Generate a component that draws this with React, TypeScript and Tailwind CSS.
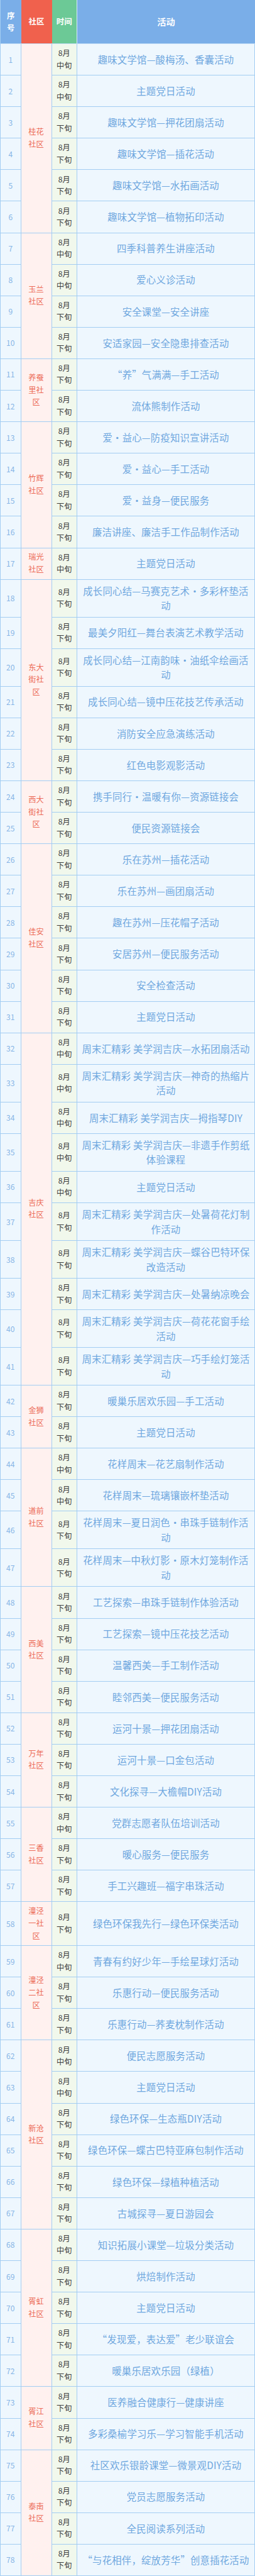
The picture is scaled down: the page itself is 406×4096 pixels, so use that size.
import React from "react";

type Row = { n: number; t: "中" | "下"; a: string[]; tall?: boolean };
type Group = { c: string[]; rows: Row[] };

const groups: Group[] = [
  {
    c: ["桂花", "社区"],
    rows: [
      { n: 1, t: "中", a: ["趣味文学馆—酸梅汤、香囊活动"] },
      { n: 2, t: "中", a: ["主题党日活动"] },
      { n: 3, t: "下", a: ["趣味文学馆—押花团扇活动"] },
      { n: 4, t: "下", a: ["趣味文学馆—插花活动"] },
      { n: 5, t: "下", a: ["趣味文学馆—水拓画活动"] },
      { n: 6, t: "下", a: ["趣味文学馆—植物拓印活动"] },
    ],
  },
  {
    c: ["玉兰", "社区"],
    rows: [
      { n: 7, t: "中", a: ["四季科普养生讲座活动"] },
      { n: 8, t: "中", a: ["爱心义诊活动"] },
      { n: 9, t: "下", a: ["安全课堂—安全讲座"] },
      { n: 10, t: "下", a: ["安适家园—安全隐患排查活动"] },
    ],
  },
  {
    c: ["养蚕", "里社", "区"],
    rows: [
      { n: 11, t: "下", a: ["“养”气满满—手工活动"] },
      { n: 12, t: "下", a: ["流体熊制作活动"] },
    ],
  },
  {
    c: ["竹辉", "社区"],
    rows: [
      { n: 13, t: "下", a: ["爱・益心—防疫知识宣讲活动"] },
      { n: 14, t: "下", a: ["爱・益心—手工活动"] },
      { n: 15, t: "下", a: ["爱・益身—便民服务"] },
      { n: 16, t: "下", a: ["廉洁讲座、廉洁手工作品制作活动"] },
    ],
  },
  {
    c: ["瑞光", "社区"],
    rows: [{ n: 17, t: "中", a: ["主题党日活动"] }],
  },
  {
    c: ["东大", "街社", "区"],
    rows: [
      { n: 18, t: "下", a: ["成长同心结—马赛克艺术・多彩杯垫活", "动"] },
      { n: 19, t: "下", a: ["最美夕阳红—舞台表演艺术教学活动"] },
      { n: 20, t: "下", a: ["成长同心结—江南韵味・油纸伞绘画活", "动"] },
      { n: 21, t: "下", a: ["成长同心结—镜中压花技艺传承活动"] },
      { n: 22, t: "下", a: ["消防安全应急演练活动"] },
      { n: 23, t: "下", a: ["红色电影观影活动"] },
    ],
  },
  {
    c: ["西大", "街社", "区"],
    rows: [
      { n: 24, t: "下", a: ["携手同行・温暖有你—资源链接会"] },
      { n: 25, t: "下", a: ["便民资源链接会"] },
    ],
  },
  {
    c: ["佳安", "社区"],
    rows: [
      { n: 26, t: "下", a: ["乐在苏州—插花活动"] },
      { n: 27, t: "下", a: ["乐在苏州—画团扇活动"] },
      { n: 28, t: "下", a: ["趣在苏州—压花帽子活动"] },
      { n: 29, t: "下", a: ["安居苏州—便民服务活动"] },
      { n: 30, t: "下", a: ["安全检查活动"] },
      { n: 31, t: "下", a: ["主题党日活动"] },
    ],
  },
  {
    c: ["吉庆", "社区"],
    rows: [
      { n: 32, t: "中", a: ["周末汇精彩 美学润吉庆—水拓团扇活动"] },
      { n: 33, t: "中", a: ["周末汇精彩 美学润吉庆—神奇的热缩片", "活动"] },
      { n: 34, t: "中", a: ["周末汇精彩 美学润吉庆—拇指琴DIY"] },
      { n: 35, t: "中", a: ["周末汇精彩 美学润吉庆—非遗手作剪纸", "体验课程"] },
      { n: 36, t: "中", a: ["主题党日活动"] },
      { n: 37, t: "下", a: ["周末汇精彩 美学润吉庆—处暑荷花灯制", "作活动"] },
      { n: 38, t: "下", a: ["周末汇精彩 美学润吉庆—蝶谷巴特环保", "改造活动"] },
      { n: 39, t: "下", a: ["周末汇精彩 美学润吉庆—处暑纳凉晚会"] },
      { n: 40, t: "下", a: ["周末汇精彩 美学润吉庆—荷花花窗手绘", "活动"] },
      { n: 41, t: "下", a: ["周末汇精彩 美学润吉庆—巧手绘灯笼活", "动"] },
    ],
  },
  {
    c: ["金狮", "社区"],
    rows: [
      { n: 42, t: "下", a: ["暖巢乐居欢乐园—手工活动"] },
      { n: 43, t: "下", a: ["主题党日活动"] },
    ],
  },
  {
    c: ["道前", "社区"],
    rows: [
      { n: 44, t: "中", a: ["花样周末—花艺扇制作活动"] },
      { n: 45, t: "中", a: ["花样周末—琉璃镶嵌杯垫活动"] },
      { n: 46, t: "下", a: ["花样周末—夏日润色・串珠手链制作活", "动"] },
      { n: 47, t: "下", a: ["花样周末—中秋灯影・原木灯笼制作活", "动"] },
    ],
  },
  {
    c: ["西美", "社区"],
    rows: [
      { n: 48, t: "下", a: ["工艺探索—串珠手链制作体验活动"] },
      { n: 49, t: "下", a: ["工艺探索—镜中压花技艺活动"] },
      { n: 50, t: "下", a: ["温馨西美—手工制作活动"] },
      { n: 51, t: "下", a: ["睦邻西美—便民服务活动"] },
    ],
  },
  {
    c: ["万年", "社区"],
    rows: [
      { n: 52, t: "下", a: ["运河十景—押花团扇活动"] },
      { n: 53, t: "下", a: ["运河十景—口金包活动"] },
      { n: 54, t: "下", a: ["文化探寻—大檐帽DIY活动"] },
    ],
  },
  {
    c: ["三香", "社区"],
    rows: [
      { n: 55, t: "中", a: ["党群志愿者队伍培训活动"] },
      { n: 56, t: "下", a: ["暖心服务—便民服务"] },
      { n: 57, t: "下", a: ["手工兴趣班—福字串珠活动"] },
    ],
  },
  {
    c: ["潼泾", "一社", "区"],
    rows: [{ n: 58, t: "下", a: ["绿色环保我先行—绿色环保类活动"], tall: true }],
  },
  {
    c: ["潼泾", "二社", "区"],
    rows: [
      { n: 59, t: "中", a: ["青春有约好少年—手绘星球灯活动"] },
      { n: 60, t: "下", a: ["乐惠行动—便民服务活动"] },
      { n: 61, t: "下", a: ["乐惠行动—荞麦枕制作活动"] },
    ],
  },
  {
    c: ["新沧", "社区"],
    rows: [
      { n: 62, t: "中", a: ["便民志愿服务活动"] },
      { n: 63, t: "中", a: ["主题党日活动"] },
      { n: 64, t: "下", a: ["绿色环保—生态瓶DIY活动"] },
      { n: 65, t: "下", a: ["绿色环保—蝶古巴特亚麻包制作活动"] },
      { n: 66, t: "下", a: ["绿色环保—绿植种植活动"] },
      { n: 67, t: "下", a: ["古城探寻—夏日游园会"] },
    ],
  },
  {
    c: ["胥虹", "社区"],
    rows: [
      { n: 68, t: "中", a: ["知识拓展小课堂—垃圾分类活动"] },
      { n: 69, t: "下", a: ["烘焙制作活动"] },
      { n: 70, t: "下", a: ["主题党日活动"] },
      { n: 71, t: "下", a: ["“发现爱，表达爱”老少联谊会"] },
      { n: 72, t: "下", a: ["暖巢乐居欢乐园（绿植）"] },
    ],
  },
  {
    c: ["胥江", "社区"],
    rows: [
      { n: 73, t: "下", a: ["医养融合健康行—健康讲座"] },
      { n: 74, t: "下", a: ["多彩桑榆学习乐—学习智能手机活动"] },
    ],
  },
  {
    c: ["泰南", "社区"],
    rows: [
      { n: 75, t: "下", a: ["社区欢乐银龄课堂—微景观DIY活动"] },
      { n: 76, t: "下", a: ["党员志愿服务活动"] },
      { n: 77, t: "下", a: ["全民阅读系列活动"] },
      { n: 78, t: "下", a: ["“与花相伴，绽放芳华”创意插花活动"] },
    ],
  },
];

function rowH(r: Row): string {
  if (r.tall) return "h-[69.7px]";
  if (r.a.length > 1) return "h-[60px]";
  return "h-[50.1px]";
}

function GroupBlock({ g }: { g: Group }) {
  return (
    <div className="flex">
      <div className="flex w-[32.5px] shrink-0 flex-col">
        {g.rows.map((r) => (
          <div
            key={r.n}
            className={`${rowH(r)} flex items-center justify-center border-r border-b border-[#a3cdf2] bg-[#eef7fe] text-[12px] text-[#86b5e6]`}
          >
            {r.n}
          </div>
        ))}
      </div>
      <div className="flex w-[49px] shrink-0 flex-col items-center justify-center border-r border-b border-[#a3cdf2] bg-[#fff1ef] text-[12.2px] leading-[19.6px] text-[#ec6b57]">
        {g.c.map((l, i) => (
          <span key={i}>{l}</span>
        ))}
      </div>
      <div className="flex min-w-0 flex-1 flex-col">
        {g.rows.map((r) => (
          <div key={r.n} className={`${rowH(r)} flex`}>
            <div className="flex w-[40.5px] shrink-0 flex-col items-center justify-center border-r border-b border-[#a3cdf2] bg-[#f1f8ec] text-[12.2px] leading-[19.4px] text-[#3d3d3d]">
              <span>8月</span>
              <span>{r.t}旬</span>
            </div>
            <div className="flex flex-1 flex-col items-center justify-center border-r border-b border-[#a3cdf2] bg-[#eef7fe] text-[15.4px] leading-[23.5px] tracking-[0.2px] text-[#6fa7df]">
              {r.a.map((l, i) => (
                <span key={i} className="whitespace-pre">
                  {l}
                </span>
              ))}
            </div>
          </div>
        ))}
      </div>
    </div>
  );
}

export default function App() {
  return (
    <div className="w-[406px] bg-white font-['Noto_Sans_CJK_SC','Noto_Sans',sans-serif]">
      <div className="border-l border-[#a3cdf2]">
        <div className="flex h-[70px] border-b border-[#c3def6] font-bold text-white">
          <div className="flex w-[32.5px] shrink-0 flex-col items-center justify-center bg-[#7aaee8] text-[12.4px] leading-[19px]">
            <span>序</span>
            <span>号</span>
          </div>
          <div className="flex w-[49px] shrink-0 items-center justify-center bg-[#f0614d] text-[12.4px]">
            社区
          </div>
          <div className="flex w-[40.5px] shrink-0 items-center justify-center border-r border-[#d9ecfb] bg-[#6cc996] text-[12.4px]">
            时间
          </div>
          <div className="flex flex-1 items-center justify-center bg-[#7aaee8] text-[14.2px]">
            活动
          </div>
        </div>
        {groups.map((g) => (
          <GroupBlock key={g.rows[0].n} g={g} />
        ))}
      </div>
    </div>
  );
}
